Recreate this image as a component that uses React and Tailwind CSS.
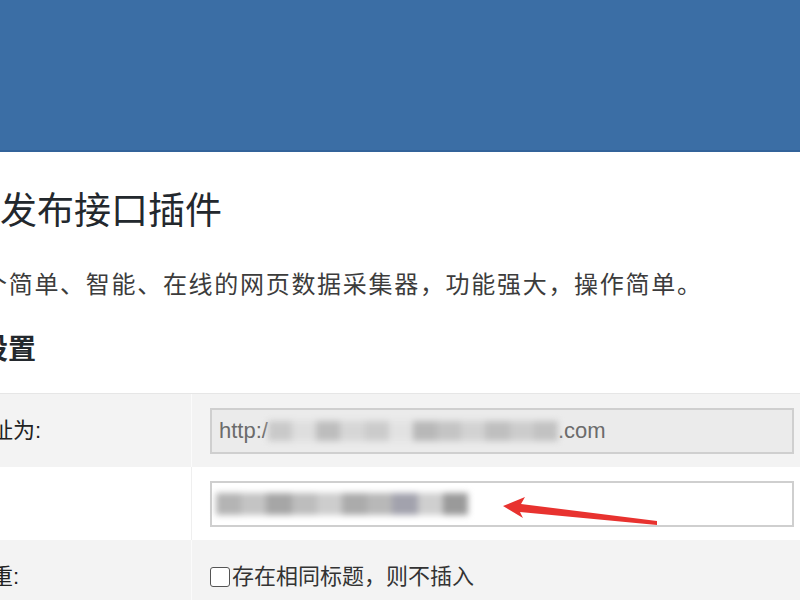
import React from 'react';

const blurA = ['#c9c9c9', '#dedede', '#bdbdbd', '#d6d6d6', '#cbcbcb', '#e2e2e2', '#b8b8b8', '#c4c4c4', '#d2d2d2', '#bfbfbf', '#cccccc', '#c2c2c2'];
const blurB = ['#b4b4b4', '#c4c4c4', '#a6a6a6', '#bdbdbd', '#cdcdcd', '#ababab', '#b8b8b8', '#a2a2ad', '#cfcfcf', '#9a9a9a'];

const Smudge = ({ colors, width, height }) => (
    <span className="flex blur-[3px]" style={{ width, height }}>
        {colors.map((c, i) => (
            <span key={i} className="flex-1" style={{ backgroundColor: c }} />
        ))}
    </span>
);

const Row = ({ label, gray, children }) => (
    <div className={`flex h-[73px] ${gray ? 'bg-[#f3f3f3]' : 'bg-white'}`}>
        <div className={`w-[192px] shrink-0 flex items-center border-r ${gray ? 'border-[#fbfbfb]' : 'border-[#efefef]'}`}>
            <span className="-ml-[9px] text-[22px] leading-[30px] text-[#222]">{label}</span>
        </div>
        <div className="flex-1 flex items-center pl-[18px] pr-[6px]">{children}</div>
    </div>
);

const App = () => {
    return (
        <div className="relative w-[800px] h-[600px] overflow-hidden bg-white font-['Liberation_Sans','Noto_Sans_CJK_SC',sans-serif]">
            <div className="h-[152px] bg-[#3b6ea5] border-b-2 border-[#33639a]" />

            <h1 className="mt-[36px] text-[37px] leading-[48px] text-[#23282d] whitespace-nowrap">发布接口插件</h1>
            <p className="mt-[34px] -ml-[17px] text-[24px] tracking-[1.7px] leading-[30px] text-[#3c3c3c] whitespace-nowrap">
                个简单、智能、在线的网页数据采集器，功能强大，操作简单。
            </p>
            <h2 className="mt-[32px] -ml-[20px] text-[28px] leading-[36px] font-bold text-[#23282d] whitespace-nowrap">设置</h2>

            <div className="mt-[25px] border-t border-[#e6e6e6]">
                <Row label="址为:" gray>
                    <div className="flex items-center w-full h-[46px] border-2 border-[#cfcfcf] bg-[#ebebeb] pl-[7px] text-[22px] text-[#6b6b6b]">
                        <span>http:/</span>
                        <Smudge colors={blurA} width="290px" height="20px" />
                        <span>.com</span>
                    </div>
                </Row>
                <Row label="">
                    <div className="flex items-center w-full h-[46px] border-2 border-[#cfcfcf] bg-white pl-[4px]">
                        <Smudge colors={blurB} width="252px" height="22px" />
                    </div>
                </Row>
                <Row label="重:" gray>
                    <label className="flex items-center text-[22px] leading-[30px] text-[#333]">
                        <span className="w-[20px] h-[20px] border-[1.5px] border-[#555] rounded-[3px] bg-white" />
                        <span className="ml-[2px]">存在相同标题，则不插入</span>
                    </label>
                </Row>
            </div>

            <svg className="absolute left-0 top-0 pointer-events-none" width="800" height="600" viewBox="0 0 800 600">
                <polygon
                    points="503,506 525,497 521,504 657,521 657,525 520,512 523,518"
                    fill="#e8322f"
                />
            </svg>
        </div>
    );
};

export default App;
